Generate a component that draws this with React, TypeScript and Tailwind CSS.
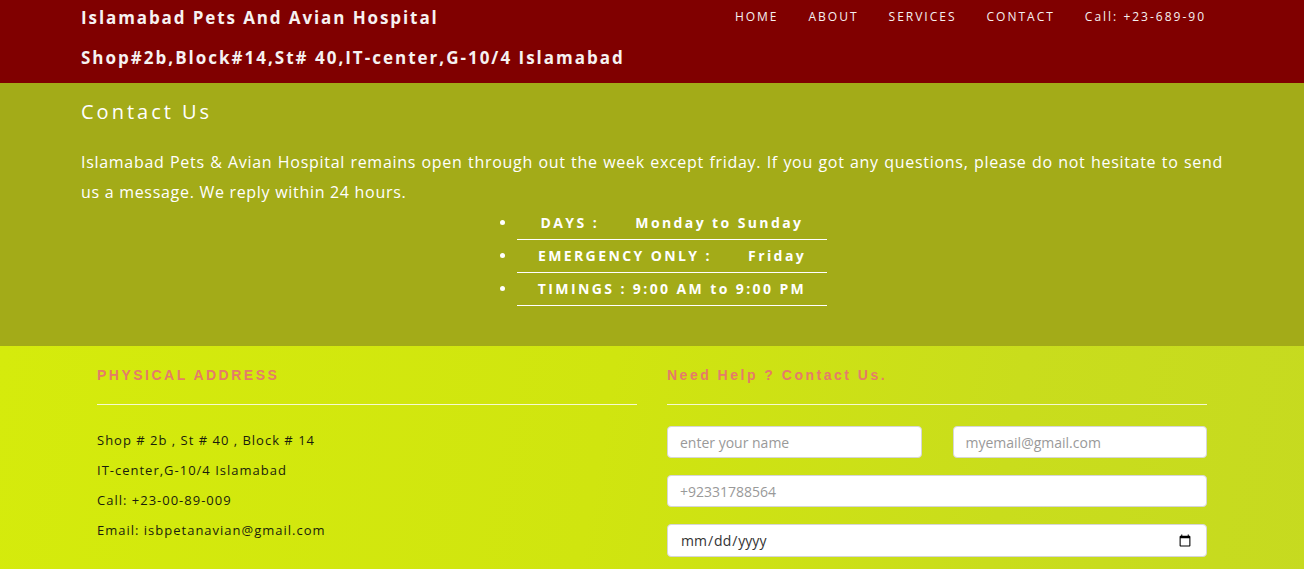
import { useState } from "react";

const navItems = ["HOME", "ABOUT", "SERVICES", "CONTACT"];

const timings = [
  { label: "DAYS :", value: "Monday to Sunday", gap: "\u00a0\u00a0\u00a0\u00a0\u00a0\u00a0" },
  { label: "EMERGENCY ONLY :", value: "Friday", gap: "\u00a0\u00a0\u00a0\u00a0\u00a0\u00a0" },
  { label: "TIMINGS :", value: "9:00 AM to 9:00 PM", gap: " " },
];

const addressLines = [
  "Shop # 2b , St # 40 , Block # 14",
  "IT-center,G-10/4 Islamabad",
  "Call: +23-00-89-009",
  "Email: isbpetanavian@gmail.com",
];

const App = () => {
  const [form, setForm] = useState({ name: "", email: "", phone: "", date: "" });

  return (
    <div className="min-h-screen font-['Open_Sans',sans-serif]">

      {/* HEADER */}
      <header className="bg-[#800000] text-[#f6f1f1]">
        <div className="w-[1142px] mx-auto flex justify-between items-start">
          <div className="pt-[6px] pb-[13px]">
            <h1 className="text-[17px] leading-[24px] font-bold tracking-[1.9px]">
              Islamabad Pets And Avian Hospital
            </h1>
            <h2 className="mt-[16px] text-[17px] leading-[24px] font-bold tracking-[2px]">
              Shop#2b,Block#14,St# 40,IT-center,G-10/4 Islamabad
            </h2>
          </div>

          <ul className="flex gap-[30px] pr-[17px] pt-px">
            {navItems.map((item) => (
              <li key={item} className="text-[12px] leading-[32px] tracking-[2px]">
                {item}
              </li>
            ))}
            <li className="text-[12px] leading-[32px] tracking-[2px]">Call: +23-689-90</li>
          </ul>
        </div>
      </header>

      {/* CONTACT INFO */}
      <section className="bg-[#a3ab18] text-white">
        <div className="w-[1142px] mx-auto pt-[15px] pb-[40px]">
          <h2 className="text-[20px] leading-[28px] tracking-[3px]">Contact Us</h2>

          <p className="mt-[21px] text-[16px] leading-[30px] tracking-[0.7px] text-justify">
            Islamabad Pets &amp; Avian Hospital remains open through out the week except friday. If you got any
            questions, please do not hesitate to send us a message. We reply within 24 hours.
          </p>

          <ul className="w-[350px] mx-auto pl-10 list-disc">
            {timings.map((t) => (
              <li
                key={t.label}
                className="py-[6px] leading-[20px] border-b border-white text-center text-[14px] font-bold tracking-[2.4px]"
              >
                {t.label}
                {t.gap}
                {t.value}
              </li>
            ))}
          </ul>
        </div>
      </section>

      {/* ADDRESS + FORM */}
      <section className="bg-[linear-gradient(100deg,#d5eb0c_0%,#d0e50f_45%,#c9dd1c_75%,#c6da20_100%)]">
        <div className="w-[1110px] mx-auto flex gap-[30px] pt-[19px] pb-[40px]">

          <div className="w-[540px]">
            <h3 className="font-['Liberation_Sans',Arial,sans-serif] font-bold text-[14px] leading-[20px] tracking-[2.5px] text-[#e57b69]">
              PHYSICAL ADDRESS
            </h3>
            <div className="mt-[19px] h-px bg-white/80" />
            <div className="mt-[20px] text-[13px] leading-[30px] tracking-[1px] text-[#1a1d0c]">
              {addressLines.map((line) => (
                <p key={line}>{line}</p>
              ))}
            </div>
          </div>

          <div className="w-[540px]">
            <h3 className="font-['Liberation_Sans',Arial,sans-serif] font-bold text-[14px] leading-[20px] tracking-[2.5px] text-[#e57b69]">
              Need Help ? Contact Us.
            </h3>
            <div className="mt-[19px] h-px bg-white/80" />

            <form className="mt-[21px] grid grid-cols-2 gap-x-[31px] gap-y-[17px]">
              <input
                type="text"
                placeholder="enter your name"
                value={form.name}
                onChange={(e) => setForm({ ...form, name: e.target.value })}
                className="h-8 bg-white rounded-[4px] border border-[#d6d6d6] px-3 text-[14px] text-[#333] placeholder:text-[#999] outline-none"
              />
              <input
                type="email"
                placeholder="myemail@gmail.com"
                value={form.email}
                onChange={(e) => setForm({ ...form, email: e.target.value })}
                className="h-8 bg-white rounded-[4px] border border-[#d6d6d6] px-3 text-[14px] text-[#333] placeholder:text-[#999] outline-none"
              />
              <input
                type="tel"
                placeholder="+92331788564"
                value={form.phone}
                onChange={(e) => setForm({ ...form, phone: e.target.value })}
                className="col-span-2 h-8 bg-white rounded-[4px] border border-[#d6d6d6] px-3 text-[14px] text-[#333] placeholder:text-[#999] outline-none"
              />
              <input
                type="date"
                value={form.date}
                onChange={(e) => setForm({ ...form, date: e.target.value })}
                className="col-span-2 h-[33px] bg-white rounded-[4px] border border-[#d6d6d6] px-3 text-[14px] text-[#333] outline-none"
              />
              <textarea
                placeholder="your message"
                className="col-span-2 h-[100px] bg-white rounded-[4px] border border-[#d6d6d6] px-3 py-2 text-[14px] text-[#333] placeholder:text-[#999] outline-none"
              />
            </form>
          </div>

        </div>
      </section>

    </div>
  );
};

export default App;
